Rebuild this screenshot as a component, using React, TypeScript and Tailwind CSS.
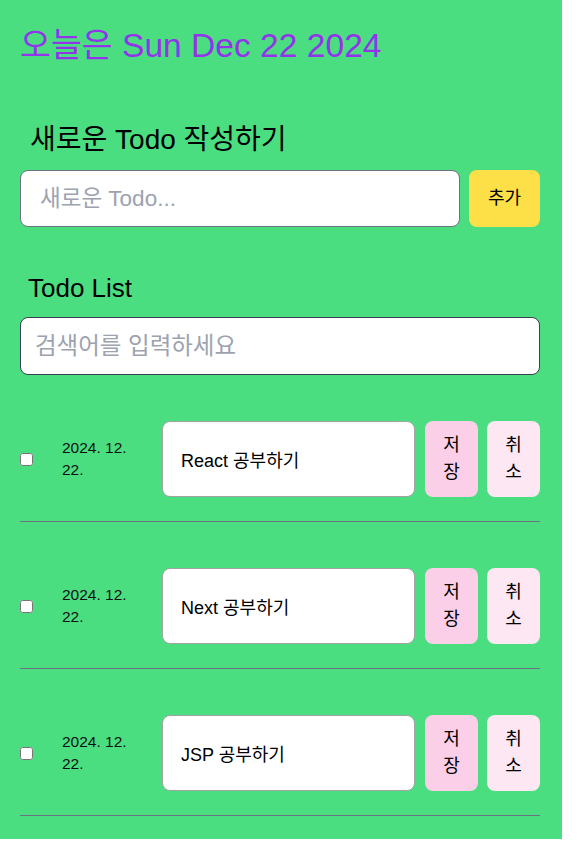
import { useState } from 'react';

interface Todo {
  id: number;
  date: string;
  content: string;
  done: boolean;
}

const initialTodos: Todo[] = [
  { id: 1, date: '2024. 12. 22.', content: 'React 공부하기', done: false },
  { id: 2, date: '2024. 12. 22.', content: 'Next 공부하기', done: false },
  { id: 3, date: '2024. 12. 22.', content: 'JSP 공부하기', done: false },
];

function TodoItem({ todo, onToggle }: { todo: Todo; onToggle: (id: number) => void }) {
  const [value, setValue] = useState(todo.content);

  return (
    <div className="flex items-center pt-[46px] pb-[24px] border-b border-[#6b7280]">
      <input
        type="checkbox"
        checked={todo.done}
        onChange={() => onToggle(todo.id)}
        className="m-0 w-[13px] h-[13px] shrink-0"
      />
      <div className="ml-[29px] w-[80px] shrink-0 text-[15.5px] leading-[22px] text-[#111]">
        {todo.date}
      </div>
      <input
        type="text"
        value={value}
        onChange={(e) => setValue(e.target.value)}
        className="ml-[20px] flex-1 min-w-0 h-[76px] px-[18px] rounded-lg border border-[#a3a3a3] bg-white text-[18px] text-black outline-none"
      />
      {/* 저장 / 취소 */}
      <button className="ml-[10px] w-[53px] h-[76px] shrink-0 px-3 rounded-lg bg-[#fbcfe8] text-[18px] leading-[27px] text-black">
        저장
      </button>
      <button className="ml-[9px] w-[53px] h-[76px] shrink-0 px-3 rounded-lg bg-[#fce7f3] text-[18px] leading-[27px] text-black">
        취소
      </button>
    </div>
  );
}

export default function App() {
  const [todos, setTodos] = useState<Todo[]>(initialTodos);
  const [newTodo, setNewTodo] = useState('');
  const [search, setSearch] = useState('');

  const addTodo = () => {
    if (!newTodo.trim()) return;
    setTodos([
      { id: Date.now(), date: '2024. 12. 22.', content: newTodo, done: false },
      ...todos,
    ]);
    setNewTodo('');
  };

  const toggle = (id: number) =>
    setTodos(todos.map((t) => (t.id === id ? { ...t, done: !t.done } : t)));

  const filtered = todos.filter((t) =>
    t.content.toLowerCase().includes(search.trim().toLowerCase())
  );

  return (
    <div className="w-[562px] bg-[#4ade80] pt-5 pl-5 pr-[22px] pb-[23px] font-['Liberation_Sans','Noto_Sans_CJK_KR',sans-serif]">
      {/* Header */}
      <h1 className="text-[33.6px] leading-[52px] text-[#9333ea]">오늘은 Sun Dec 22 2024</h1>

      {/* Editor */}
      <h2 className="mt-[50px] pl-[10px] text-[28px] leading-[36px] text-black">새로운 Todo 작성하기</h2>
      <div className="mt-3 flex gap-[9px]">
        <input
          type="text"
          value={newTodo}
          onChange={(e) => setNewTodo(e.target.value)}
          placeholder="새로운 Todo..."
          className="flex-1 min-w-0 h-[57px] px-[19px] rounded-lg border border-[#6b7280] bg-white text-[22.5px] text-black placeholder:text-[#9ca3af] outline-none"
        />
        <button
          onClick={addTodo}
          className="w-[71px] h-[57px] rounded-lg bg-[#fde047] text-[18px] text-black"
        >
          추가
        </button>
      </div>

      {/* List */}
      <h2 className="mt-[43px] pl-2 text-[26px] leading-[36px] text-black">Todo List</h2>
      <input
        type="text"
        value={search}
        onChange={(e) => setSearch(e.target.value)}
        placeholder="검색어를 입력하세요"
        className="mt-[11px] w-full h-[58px] px-[14px] rounded-lg border border-[#374151] bg-white text-[23.5px] text-black placeholder:text-[#9ca3af] outline-none"
      />
      <div className="flex flex-col">
        {filtered.map((todo) => (
          <TodoItem key={todo.id} todo={todo} onToggle={toggle} />
        ))}
      </div>
    </div>
  );
}
